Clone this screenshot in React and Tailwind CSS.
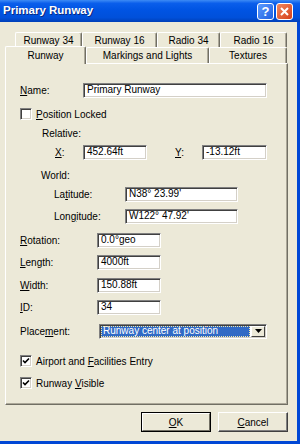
import React from 'react';

const sunken =
  'bg-white border border-t-[#808080] border-l-[#808080] border-r-white border-b-white shadow-[inset_1px_1px_0_#404040,inset_-1px_-1px_0_#D4D0C8]';

function Field({ w, children }) {
  return (
    <div className={`${w} h-[15px] ${sunken} flex items-center pl-[3px] leading-none whitespace-nowrap overflow-hidden`}>
      {children}
    </div>
  );
}

function Check({ checked, children }) {
  return (
    <div className="flex items-center h-[16px] gap-[4px]">
      <div className={`w-[12px] h-[12px] ${sunken} flex items-center justify-center`}>
        {checked && (
          <svg width="8" height="8" viewBox="0 0 8 8">
            <path d="M1 3.5 L3 5.5 L7 1.5" stroke="#000" strokeWidth="1.6" fill="none" />
          </svg>
        )}
      </div>
      <span>{children}</span>
    </div>
  );
}

function Tab({ w, selected, children }) {
  if (selected) {
    return (
      <div
        className={`${w} h-[18px] mb-[-1px] relative z-10 bg-[#ECE9D8] flex items-center justify-center border-t border-l border-r border-t-white border-l-white border-r-[#716F64] rounded-t-[2px] shadow-[inset_-1px_0_0_#ACA899]`}
      >
        {children}
      </div>
    );
  }
  return (
    <div
      className={`${w} h-full bg-[#ECE9D8] flex items-center justify-center border-t border-l border-r border-t-white border-l-white border-r-[#716F64] rounded-t-[2px] shadow-[inset_-1px_0_0_#ACA899]`}
    >
      {children}
    </div>
  );
}

function Button({ def, children }) {
  return (
    <div
      className={`w-[70px] h-[20px] flex items-center justify-center bg-[#ECE9D8] border ${
        def ? 'border-black' : 'border-t-white border-l-white border-r-[#404040] border-b-[#404040]'
      }`}
    >
      <div
        className={`w-full h-full flex items-center justify-center ${
          def
            ? 'border border-t-white border-l-white border-r-[#716F64] border-b-[#716F64]'
            : 'shadow-[inset_-1px_-1px_0_#808080]'
        }`}
      >
        {children}
      </div>
    </div>
  );
}

const U = ({ children }) => <span className="underline underline-offset-[1px]">{children}</span>;

export default function App() {
  return (
    <div className="w-[300px] h-[444px] overflow-hidden bg-[#ECE9D8] flex flex-col font-['Liberation_Sans',Arial,sans-serif] text-[10px] text-black">
      {/* title bar */}
      <div className="h-[22px] flex items-center pl-[3px] pr-[7px] bg-[linear-gradient(to_bottom,#3D8BF5_0%,#0A5EEB_15%,#0054E3_45%,#0050DA_80%,#003FB8_100%)]">
        <span className="text-white font-bold text-[11.5px] [text-shadow:1px_1px_0_#0A2A80]">Primary Runway</span>
        <div className="flex-1" />
        <div className="flex gap-[2px]">
          <div className="w-[17px] h-[17px] rounded-[3px] border border-white bg-[linear-gradient(135deg,#5C9BFF,#1E5FE0)] flex items-center justify-center text-white font-bold text-[13px] leading-none">
            ?
          </div>
          <div className="w-[17px] h-[17px] rounded-[3px] border border-white bg-[linear-gradient(135deg,#F08860,#D6401A)] flex items-center justify-center">
            <svg width="9" height="9" viewBox="0 0 9 9">
              <path d="M1 1 L8 8 M8 1 L1 8" stroke="#fff" strokeWidth="2" />
            </svg>
          </div>
        </div>
      </div>

      <div className="flex flex-1">
        <div className="flex-1 flex flex-col pt-[10px]">
          {/* tabs */}
          <div className="flex ml-[15px] h-[15px]">
            <Tab w="w-[67px]">Runway 34</Tab>
            <Tab w="w-[75px]">Runway 16</Tab>
            <Tab w="w-[63px]">Radio 34</Tab>
            <Tab w="w-[67px]">Radio 16</Tab>
          </div>
          <div className="flex items-end ml-[5px] h-[16px]">
            <Tab w="w-[81px]" selected>Runway</Tab>
            <Tab w="w-[123px]">Markings and Lights</Tab>
            <Tab w="w-[78px]">Textures</Tab>
          </div>

          {/* panel */}
          <div className="ml-[5px] w-[283px] h-[342px] border border-t-white border-l-white border-r-[#716F64] border-b-[#716F64] shadow-[inset_-1px_-1px_0_#ACA899] pl-[14px] pt-[18px] flex flex-col">
            <div className="flex items-center h-[16px]">
              <span className="w-[63px]"><U>N</U>ame:</span>
              <Field w="w-[184px]">Primary Runway</Field>
            </div>
            <div className="mt-[8px]">
              <Check><U>P</U>osition Locked</Check>
            </div>
            <div className="flex items-center h-[16px] mt-[3px] pl-[22px]">Relative:</div>
            <div className="flex items-center h-[16px] mt-[3px]">
              <span className="ml-[35px] w-[28px]"><U>X</U>:</span>
              <Field w="w-[64px]">452.64ft</Field>
              <span className="ml-[28px] w-[27px]"><U>Y</U>:</span>
              <Field w="w-[65px]">-13.12ft</Field>
            </div>
            <div className="flex items-center h-[16px] mt-[7px] pl-[21px]">World:</div>
            <div className="flex items-center h-[16px] mt-[3px]">
              <span className="ml-[34px] w-[71px]">La<U>t</U>itude:</span>
              <Field w="w-[113px]">N38° 23.99'</Field>
            </div>
            <div className="flex items-center h-[16px] mt-[6px]">
              <span className="ml-[34px] w-[71px]">Lon<U>g</U>itude:</span>
              <Field w="w-[113px]">W122° 47.92'</Field>
            </div>
            <div className="flex items-center h-[16px] mt-[8px]">
              <span className="w-[77px]"><U>R</U>otation:</span>
              <Field w="w-[64px]">0.0°geo</Field>
            </div>
            <div className="flex items-center h-[16px] mt-[6px]">
              <span className="w-[77px]"><U>L</U>ength:</span>
              <Field w="w-[64px]">4000ft</Field>
            </div>
            <div className="flex items-center h-[16px] mt-[7px]">
              <span className="w-[77px]"><U>W</U>idth:</span>
              <Field w="w-[64px]">150.88ft</Field>
            </div>
            <div className="flex items-center h-[16px] mt-[6px]">
              <span className="w-[77px]"><U>I</U>D:</span>
              <Field w="w-[64px]">34</Field>
            </div>
            <div className="flex items-center h-[16px] mt-[8px]">
              <span className="w-[79px]">Place<U>m</U>ent:</span>
              <div className={`w-[168px] h-[15px] ${sunken} flex p-[1px]`}>
                <div className="flex-1 bg-[#316AC5] text-white flex items-center pl-[2px] outline-1 outline-dotted outline-[#F5E9A8] -outline-offset-1 leading-none whitespace-nowrap">
                  Runway center at position
                </div>
                <div className="w-[14px] ml-[1px] bg-[#ECE9D8] border border-t-white border-l-white border-r-[#404040] border-b-[#404040] flex items-center justify-center">
                  <svg width="7" height="4" viewBox="0 0 7 4">
                    <path d="M0 0 H7 L3.5 4 Z" fill="#000" />
                  </svg>
                </div>
              </div>
            </div>
            <div className="mt-[14px]">
              <Check checked>Airport and <U>F</U>acilities Entry</Check>
            </div>
            <div className="mt-[6px]">
              <Check checked>Runway <U>V</U>isible</Check>
            </div>
          </div>

          {/* buttons */}
          <div className="flex justify-end gap-[7px] pr-[9px] mt-[7px]">
            <Button def><U>O</U>K</Button>
            <Button><U>C</U>ancel</Button>
          </div>
        </div>
        <div className="w-[3px] bg-[#0047D5]" />
      </div>
      <div className="h-[3px] bg-[#0047D5]" />
    </div>
  );
}
